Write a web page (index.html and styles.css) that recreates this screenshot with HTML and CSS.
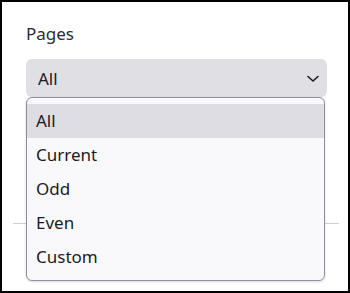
FILE: index.html
```html
<!DOCTYPE html>
<html lang="en">
<head>
  <meta charset="UTF-8">
  <meta name="viewport" content="width=device-width, initial-scale=1.0">
  <title>Pages</title>
  <link rel="stylesheet" href="styles.css">
</head>
<body>
  <div class="panel">
    <div class="field">
      <label class="field-label">Pages</label>
      <div class="select">
        <span class="select-value">All</span>
        <svg class="chevron" width="12" height="8" viewBox="0 0 12 8">
          <path d="M1 1.5 L6 6 L11 1.5" fill="none" stroke="#1c1b22" stroke-width="1.6" stroke-linecap="round" stroke-linejoin="round"/>
        </svg>
      </div>
      <ul class="menu">
        <li class="menu-item active">All</li>
        <li class="menu-item">Current</li>
        <li class="menu-item">Odd</li>
        <li class="menu-item">Even</li>
        <li class="menu-item">Custom</li>
      </ul>
    </div>
    <div class="divider"></div>
  </div>
</body>
</html>
```

FILE: styles.css
```css
body {
  margin: 0;
  font-family: "Noto Sans", "DejaVu Sans", sans-serif;
  color: #1c1b22;
  background: #fff;
}
.panel {
  box-sizing: border-box;
  width: 350px;
  height: 293px;
  border: 2px solid #000;
  padding: 20px 21px 0 24px;
}
.field {
  position: relative;
}
.field-label {
  display: block;
  font-size: 17px;
  line-height: 24px;
  color: #2b2a33;
  margin-bottom: 13px;
}
.select {
  display: flex;
  align-items: center;
  justify-content: space-between;
  height: 38px;
  padding: 0 8px 0 12px;
  background: #e0dfe4;
  border-radius: 6px;
  font-size: 17px;
}
.select-value {
  line-height: 24px;
  margin-top: 2px;
}
.chevron {
  display: block;
  margin-top: 1px;
}
.menu {
  position: absolute;
  top: 75px;
  left: 0;
  width: 299px;
  box-sizing: border-box;
  margin: 0;
  padding: 6px 0;
  list-style: none;
  background: #f9f9fb;
  border: 1px solid #8f8f9d;
  border-radius: 6px;
  box-shadow: 0 1px 3px rgba(0, 0, 0, 0.15);
}
.menu-item {
  height: 34px;
  line-height: 34px;
  padding-left: 9px;
  font-size: 17px;
}
.menu-item.active {
  background: #dedde3;
}
.divider {
  height: 1px;
  background: #d0d0d7;
  margin: 126px -12px 0 -13px;
}
```
